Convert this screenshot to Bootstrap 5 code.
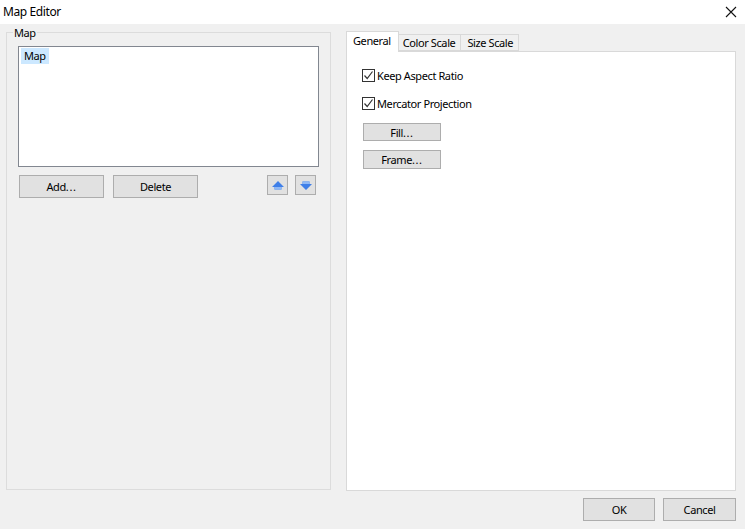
<!DOCTYPE html>
<html lang="en">
<head>
<meta charset="utf-8">
<title>Map Editor</title>
<link rel="stylesheet" href="https://cdn.jsdelivr.net/npm/bootstrap@5.3.0/dist/css/bootstrap.min.css">
<style>
html,body{height:100%;}
body{width:745px;height:529px;overflow:hidden;background:#f0f0f0;color:#000;font-family:"Noto Sans","Liberation Sans",sans-serif;font-size:11px;line-height:15px;letter-spacing:-.4px;}
.dlg-title{height:24px;background:#fff;padding:0 0 0 3px;font-size:12px;line-height:22px;}
.dlg-close{width:12px;height:12px;margin:0 8px 1px 0;padding:0;border:0;background:none;line-height:0;}
.dlg-main{height:474px;padding:8px 9px 0 6px;gap:15px;}
.group-box{position:relative;width:325px;height:458px;padding:0 11px;border:1px solid #dcdcdc;}
.group-label{position:absolute;top:-8px;left:6px;padding:0 1px;background:#f0f0f0;}
.map-list{height:121px;margin-top:13px;padding:1px 2px;background:#fff;border:1px solid #828790;}
.map-item{width:28px;height:16px;padding-left:3px;background:#cce8ff;}
.win-btn{background:#e1e1e1;border:1px solid #adadad;border-radius:0;padding:0;color:#000;font-size:11px;line-height:15px;letter-spacing:-.4px;}
.win-btn:hover{background:#e1e1e1;border-color:#adadad;color:#000;}
.dots{letter-spacing:.6px;}
.list-actions{margin:8px 3px 0 1px;}
.btn-list{width:85px;height:23px;}
.btn-list+.btn-list{margin-left:9px;}
.btn-arrow{width:21px;height:20px;line-height:0;}
.btn-arrow+.btn-arrow{margin-left:7px;}
.tab-side{width:390px;}
.tab-strip{height:20px;border:0;flex-wrap:nowrap;margin-top:-1px;}
.tab-strip .nav-link{height:17px;margin:3px 0 0 0;padding:0 5px 0 4px;border:1px solid #d9d9d9;border-left:0;border-radius:0;background:#f0f0f0;color:#000;font-size:11px;line-height:16px;}
.tab-strip .nav-link.tab-last{padding:0 5px 0 6px;}
.tab-strip .nav-link.active{position:relative;z-index:1;height:21px;margin:0;padding:0 7px 0 6px;border:1px solid #d9d9d9;border-bottom:0;background:#fff;color:#000;line-height:17px;}
.tab-body{height:440px;background:#fff;border:1px solid #d9d9d9;padding:16px 0 0 15px;}
.win-check{height:15px;gap:2px;margin-bottom:13px;}
.win-box{width:13px;height:13px;flex:none;border:1px solid #333;background:#fff;line-height:0;}
.win-box svg{display:block;}
.btn-page{display:block;width:78px;height:19px;margin:0 0 8px 1px;}
.btn-fill{height:18px;margin-top:-1px;margin-bottom:9px;}
.dlg-foot{height:31px;padding:0 9px 0 0;gap:8px;}
.btn-foot{width:72px;height:23px;}
.btn-cancel{width:73px;}
</style>
</head>
<body>
<div class="dlg-title d-flex justify-content-between align-items-center">
  <span>Map Editor</span>
  <button class="dlg-close" type="button" aria-label="Close">
    <svg width="12" height="12" viewBox="0 0 12 12"><path d="M1 1L11 11M11 1L1 11" stroke="#111" stroke-width="1.1" fill="none"/></svg>
  </button>
</div>
<div class="dlg-main d-flex">
  <div class="group-box">
    <span class="group-label">Map</span>
    <div class="map-list"><div class="map-item">Map</div></div>
    <div class="list-actions d-flex">
      <button class="btn win-btn btn-list" type="button">Add<span class="dots">...</span></button>
      <button class="btn win-btn btn-list" type="button">Delete</button>
      <div class="ms-auto d-flex">
        <button class="btn win-btn btn-arrow" type="button" aria-label="Move up">
          <svg width="12" height="9" viewBox="0 0 12 9"><path d="M6 0L12 6H9.5V8.5H2.5V6H0Z" fill="#3f7fe8"/><path d="M2.5 6H9.5V8.5H2.5Z" fill="#8fb8f5"/></svg>
        </button>
        <button class="btn win-btn btn-arrow" type="button" aria-label="Move down">
          <svg width="12" height="9" viewBox="0 0 12 9"><path d="M6 9L12 3H9.5V.5H2.5V3H0Z" fill="#3f7fe8"/><path d="M2.5 .5H9.5V3H2.5Z" fill="#8fb8f5"/></svg>
        </button>
      </div>
    </div>
  </div>
  <div class="tab-side">
    <ul class="nav nav-tabs tab-strip">
      <li class="nav-item"><a class="nav-link active" href="#">General</a></li>
      <li class="nav-item"><a class="nav-link" href="#">Color Scale</a></li>
      <li class="nav-item"><a class="nav-link tab-last" href="#">Size Scale</a></li>
    </ul>
    <div class="tab-body">
      <div class="win-check d-flex align-items-center">
        <span class="win-box"><svg width="11" height="11" viewBox="0 0 11 11"><path d="M1.5 5.5L4.2 8.5L9.5 1.5" stroke="#333" stroke-width="1.2" fill="none"/></svg></span>
        <span>Keep Aspect Ratio</span>
      </div>
      <div class="win-check d-flex align-items-center">
        <span class="win-box"><svg width="11" height="11" viewBox="0 0 11 11"><path d="M1.5 5.5L4.2 8.5L9.5 1.5" stroke="#333" stroke-width="1.2" fill="none"/></svg></span>
        <span>Mercator Projection</span>
      </div>
      <button class="btn win-btn btn-page btn-fill" type="button">Fill<span class="dots">...</span></button>
      <button class="btn win-btn btn-page" type="button">Frame<span class="dots">...</span></button>
    </div>
  </div>
</div>
<div class="dlg-foot d-flex justify-content-end align-items-start">
  <button class="btn win-btn btn-foot" type="button">OK</button>
  <button class="btn win-btn btn-foot btn-cancel" type="button">Cancel</button>
</div>
<script src="https://cdn.jsdelivr.net/npm/bootstrap@5.3.0/dist/js/bootstrap.bundle.min.js"></script>
</body>
</html>
